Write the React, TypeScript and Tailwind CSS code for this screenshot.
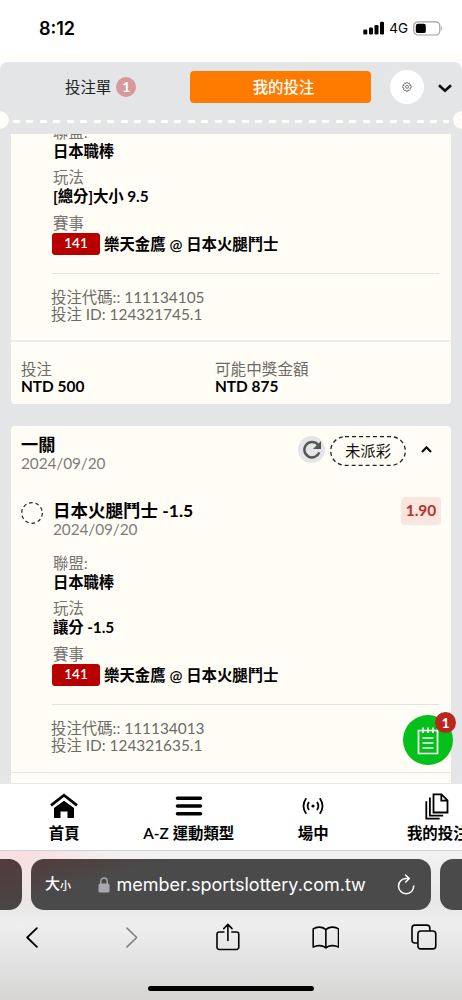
import { ReactNode } from "react";

interface IField {
  label: string;
  value: string;
}

interface IBet {
  code: string;
  id: string;
  fields: IField[];
}

const bets: IBet[] = [
  {
    code: "111134105",
    id: "124321745.1",
    fields: [
      { label: "聯盟:", value: "日本職棒" },
      { label: "玩法", value: "[總分]大小 9.5" },
    ],
  },
  {
    code: "111134013",
    id: "124321635.1",
    fields: [
      { label: "聯盟:", value: "日本職棒" },
      { label: "玩法", value: "讓分 -1.5" },
    ],
  },
];

const BetDetail = ({ bet }: { bet: IBet }) => {
  return (
    <div className="pl-[42px] pr-3">
      {bet.fields.map((data, index) => (
        <div key={`keyField${index}`} className="mb-[7.5px]">
          <div className="leading-[19px] text-[#73736f]">{data.label}</div>
          <div className="leading-[19px] font-bold tracking-[-0.1px] text-black">
            {data.value}
          </div>
        </div>
      ))}
      <div className="leading-[19px] text-[#73736f]">賽事</div>
      <div className="flex h-[22px] items-center">
        <span className="mr-[5px] -ml-px flex h-[22px] w-12 items-center justify-center rounded-[3px] bg-[#b80000] text-[13.5px] font-semibold text-white">
          141
        </span>
        <span className="mt-0.5 -ml-px font-semibold text-black">
          樂天金鷹 @ 日本火腿鬥士
        </span>
      </div>
      <div className="mt-[18px] -ml-px border-t border-[#e3e2dc]" />
      <div className="mt-[15px] -ml-0.5 pb-[18px] leading-[17px] text-[#6b6b67]">
        <div>投注代碼:: {bet.code}</div>
        <div>投注 ID: {bet.id}</div>
      </div>
    </div>
  );
};

const NavItem = ({ label, children }: { label: string; children: ReactNode }) => {
  return (
    <div className="flex w-[124.5px] shrink-0 flex-col items-center pt-[7px]">
      <div className="flex h-[30px] items-center">{children}</div>
      <div className="text-[15.4px] leading-6 font-semibold whitespace-nowrap text-black">
        {label}
      </div>
    </div>
  );
};

const StatusBar = () => {
  return (
    <div className="flex h-[54px] shrink-0 items-center justify-between bg-white pt-[2px] pr-[19px] pl-[39px] font-['Inter',sans-serif]">
      <span className="text-[18px] font-semibold text-black">8:12</span>
      <div className="flex items-center">
        <svg width="22" height="14" viewBox="0 0 22 14" className="mr-1">
          <rect x="0.3" y="8.5" width="4" height="5" rx="1.2" />
          <rect x="6" y="6.5" width="4" height="7" rx="1.2" />
          <rect x="11.5" y="4" width="4" height="9.5" rx="1.2" />
          <rect x="17" y="0.8" width="4" height="12.7" rx="1.2" />
        </svg>
        <span className="mr-[5px] text-[13.5px] text-black">4G</span>
        <svg width="30" height="15" viewBox="0 0 30 15" fill="none">
          <rect x="0.8" y="0.8" width="26" height="13.2" rx="4" stroke="#a0a0a0" strokeWidth="1.2" />
          <rect x="2.8" y="2.7" width="10" height="9.4" rx="2.2" fill="#000" />
          <path d="M28.2 5.2c1.3.6 1.3 3.8 0 4.4z" fill="#a0a0a0" />
        </svg>
      </div>
    </div>
  );
};

const SlipHeader = () => {
  return (
    <div className="h-[80px] shrink-0 bg-[#fffdf5] pt-2">
      <div className="h-[72px] rounded-t-[8px] bg-[#e4e5e7] pt-[9px]">
        <div className="flex h-8 items-center">
          <div className="flex w-[190px] items-center pl-[65px] text-[15.4px] text-[#222]">
            <span className="pt-0.5">投注單</span>
            <span className="ml-[5px] flex size-5 items-center justify-center rounded-full bg-[#d7999b] text-[14px] font-bold text-white">
              1
            </span>
          </div>
          <div className="flex h-8 w-[181px] items-center justify-center rounded-[4px] bg-[#ff7b00] pt-0.5 pl-[6px] text-[15.4px] font-medium text-white">
            我的投注
          </div>
          <div className="ml-[19px] flex size-[34px] items-center justify-center rounded-full bg-white">
            <svg width="10" height="10" viewBox="0 0 10 10" fill="none" stroke="#555" strokeWidth="0.8">
              <path d="M4.200.6h1.600l.3 1 1-.5 1.200 1.100-.6 1.100 1.400.4v2.100l-1.300.4.5 1.100-1.100 1.200-1.200-.5-.4 1.300H4.200L3.800 8l-1.200.5-1.100-1.200.5-1.100L.8 5.800V3.700l1.300-.4-.5-1.100L2.700 1.100l1.100.5z" />
              <circle cx="5" cy="4.800" r="1.500" />
            </svg>
          </div>
          <svg width="14" height="9" viewBox="0 0 14 9" fill="none" stroke="#111" strokeWidth="2.600" className="mt-0.5 ml-[14px]">
            <path d="M1 1.200l6 5.600 6-5.600" />
          </svg>
        </div>
        <div className="mt-2 flex h-[18px] items-center justify-between">
          <span className="h-[18px] w-[9px] rounded-r-full bg-[#fffdf5]" />
          <span className="mt-[3px] mr-1 ml-1 h-[3px] flex-1 bg-[repeating-linear-gradient(90deg,#fffdf5_0_7px,transparent_7px_13.45px)]" />
          <span className="h-[18px] w-[9px] rounded-l-full bg-[#fffdf5]" />
        </div>
      </div>
    </div>
  );
};

const BetList = () => {
  return (
    <div className="h-[649px] shrink-0 overflow-hidden bg-[#e4e5e7] pr-[11px] pl-[11px] text-[15.4px]">
      <div className="h-[270px] overflow-hidden rounded-b-[4px] bg-[#fffdf5]">
        <div className="-mt-[11.5px] -mb-px">
          <BetDetail bet={bets[0]} />
        </div>
        <div className="flex border-t-2 border-[#eeede8] pt-[19px] pl-[10px] leading-[17px]">
          <div className="w-[194px]">
            <div className="text-[#6b6b67]">投注</div>
            <div className="font-bold text-black">NTD 500</div>
          </div>
          <div>
            <div className="text-[15.6px] text-[#6b6b67]">可能中獎金額</div>
            <div className="font-bold text-black">NTD 875</div>
          </div>
        </div>
      </div>

      <div className="mt-[22px] h-[380px] rounded-t-[4px] bg-[#fffdf5]">
        <div className="flex h-[71px] pt-[9px] pl-[10px]">
          <div className="w-[277px]">
            <div className="text-[17.2px] leading-[19px] font-semibold text-black">
              一關
            </div>
            <div className="leading-[18px] tracking-[-0.1px] text-[#7d7d79]">
              2024/09/20
            </div>
          </div>
          <span className="mt-px flex size-[27px] items-center justify-center rounded-full bg-[#e4e5e7]">
            <svg width="20" height="20" viewBox="0 0 20 20" fill="none">
              <path d="M16 4.800A7.700 7.700 0 1 0 17.300 12.300" stroke="#555" strokeWidth="2.400" />
              <path d="M19 1v8h-8z" fill="#555" />
            </svg>
          </span>
          <span className="relative mt-px ml-[5px] flex h-[30px] w-[76px] items-center justify-center pt-[2px] text-[15.4px] text-[#111]">
            <svg className="absolute inset-0" width="76" height="30" fill="none">
              <rect x="0.700" y="0.700" width="74.600" height="28.600" rx="14.300" stroke="#222" strokeWidth="1.300" strokeDasharray="4 3" />
            </svg>
            未派彩
          </span>
          <svg width="11" height="8" viewBox="0 0 11 8" fill="none" stroke="#111" strokeWidth="2.300" className="mt-[10px] ml-[15px]">
            <path d="M1 7l4.500-4.700 4.500 4.700" />
          </svg>
        </div>
        <div className="flex h-[56.5px] pt-[4px] pl-[10px]">
          <svg width="22" height="22" fill="none" className="mt-[1px]">
            <circle cx="11" cy="11" r="10.300" stroke="#222" strokeWidth="1.200" strokeDasharray="3.600 2.870" />
          </svg>
          <div className="ml-[10px] w-[348px]">
            <div className="text-[17.500px] leading-[19px] font-bold text-black">
              日本火腿鬥士 -1.5
            </div>
            <div className="leading-[18px] tracking-[-0.1px] text-[#7d7d79]">
              2024/09/20
            </div>
          </div>
          <span className="-mt-1 flex h-[28px] w-10 items-center justify-center rounded-[4px] bg-[#f8e6df] font-bold text-[#bd2c24]">
            1.90
          </span>
        </div>
        <BetDetail bet={bets[1]} />
        <div className="border-t border-[#e6e5df]" />
      </div>
    </div>
  );
};

const BottomNav = () => {
  return (
    <div className="flex h-[67px] shrink-0 overflow-hidden border-t border-[#e6e6e4] bg-white pl-[2px]">
      <NavItem label="首頁">
        <svg width="28" height="26" viewBox="0 0 28 26">
          <path d="M1 12.300L14 2.200l13 10.100" fill="none" stroke="#000" strokeWidth="2.800" />
          <path d="M4 15L14 7.700l10 7.300V25h-6.500v-6.500h-7V25H4z" />
        </svg>
      </NavItem>
      <NavItem label="A-Z 運動類型">
        <svg width="28" height="20" viewBox="0 0 28 20" stroke="#000" strokeWidth="3.600" strokeLinecap="round">
          <path d="M2.500 2.300h23M2.500 10h23M2.500 17.700h23" />
        </svg>
      </NavItem>
      <NavItem label="場中">
        <svg width="22" height="18" viewBox="0 0 22 18" fill="none" stroke="#000" strokeWidth="1.800">
          <circle cx="11" cy="9" r="1.600" fill="#000" stroke="none" />
          <path d="M7 5q-2.800 4 0 8M15 5q2.800 4 0 8M4.200 1.200q-5.500 7.800 0 15.600M17.800 1.200q5.500 7.800 0 15.600" />
        </svg>
      </NavItem>
      <NavItem label="我的投注">
        <svg width="24" height="27" viewBox="0 0 24 27" fill="none" stroke="#000" strokeWidth="1.800" className="-ml-0.5">
          <path d="M8.500 1.300h8l6 6v12.200h-14zM16.300 1.300v6.300h6.200" />
          <path d="M4.900 4.500v18.200h13.300M1.300 8.200v17.500h13.300" />
        </svg>
      </NavItem>
    </div>
  );
};

const Browser = () => {
  return (
    <div className="relative h-[150px] shrink-0 overflow-hidden border-t border-[#d2d2d2] bg-[radial-gradient(ellipse_100px_70px_at_22px_0px,#f8dedf,transparent),linear-gradient(180deg,#f2f2f2_0%,#e7e7e7_35%,#eeeeee_50%,#e5e5e5_68%,#d6d5d4_100%)] font-['Inter','Noto_Sans_CJK_TC',sans-serif]">
      <div className="mt-2 -ml-5 flex h-[51px] w-[520px] gap-[9px]">
        <div className="w-[42px] shrink-0 rounded-[13px] bg-[linear-gradient(180deg,#533b3b,#494646)]" />
        <div className="flex w-[400px] shrink-0 items-center rounded-[13px] bg-[linear-gradient(165deg,#533b3b_0%,#4a4a4a_25%)] pl-[14px] text-white">
          <span className="text-[15px] font-medium">大</span>
          <span className="mt-1 text-[11px] font-medium">小</span>
          <svg width="12" height="16" viewBox="0 0 12 16" className="mr-[6.5px] ml-[27px]">
            <rect x="0.500" y="6.500" width="11" height="9" rx="1.500" fill="#aaa8ae" />
            <path d="M2.800 7V4.500a3.200 3.500 0 0 1 6.400 0V7" fill="none" stroke="#aaa8ae" strokeWidth="1.400" />
          </svg>
          <span className="w-[280px] text-[18px]">
            member.sportslottery.com.tw
          </span>
          <svg width="18" height="21" viewBox="0 0 18 21" fill="none" stroke="#fff" strokeWidth="1.500" strokeLinecap="round" strokeLinejoin="round">
            <path d="M11.500 4.500H9A7.600 7.600 0 1 0 16.700 12M8.500 1l3.800 3.500-3.600 3.500" />
          </svg>
        </div>
        <div className="w-[42px] shrink-0 rounded-[13px] bg-[#4a4a4a]" />
      </div>
      <div className="mt-[12px] flex h-[30px] items-center justify-between pr-[25px] pl-[26px]">
        <svg width="12" height="21" viewBox="0 0 12 21" fill="none" stroke="#000" strokeWidth="1.800" strokeLinecap="round" strokeLinejoin="round">
          <path d="M11 1L1.200 10.500 11 20" />
        </svg>
        <svg width="12" height="21" viewBox="0 0 12 21" fill="none" stroke="#7d7d7d" strokeWidth="1.500" strokeLinecap="round" strokeLinejoin="round" className="ml-[88px]">
          <path d="M1 1l9.800 9.500L1 20" />
        </svg>
        <svg width="24" height="28" viewBox="0 0 24 28" fill="none" stroke="#000" strokeWidth="1.600" strokeLinecap="round" strokeLinejoin="round" className="ml-[78px]">
          <path d="M8 9H3.300A2.300 2.300 0 0 0 1 11.300v13A2.300 2.300 0 0 0 3.300 26.600h17.400a2.300 2.300 0 0 0 2.300-2.300v-13A2.300 2.300 0 0 0 20.700 9H16M12 17.500V1.500M7.800 5.500L12 1.300l4.200 4.200" />
        </svg>
        <svg width="28" height="23" viewBox="0 0 28 23" fill="none" stroke="#000" strokeWidth="1.600" strokeLinejoin="round" className="ml-[72px]">
          <path d="M14 3.500C11 .5 5 .2 1.200 2.800v18.400c4-2.200 9.500-2 12.800.8 3.300-2.800 8.800-3 12.800-.8V2.800C23 .2 17 .5 14 3.500zM14 3.500V22" />
        </svg>
        <svg width="26" height="26" viewBox="0 0 26 26" fill="none" stroke="#000" strokeWidth="1.600" className="ml-[72px]">
          <rect x="7" y="7" width="18" height="18" rx="3" />
          <path d="M7 19H4a3 3 0 0 1-3-3V4a3 3 0 0 1 3-3h12a3 3 0 0 1 3 3v3" />
        </svg>
      </div>
      <div className="mt-[34px] ml-[148px] h-[5px] w-[166px] rounded-full bg-black" />
    </div>
  );
};

export default function App() {
  return (
    <div className="relative flex h-[1000px] w-[462px] flex-col overflow-hidden bg-white font-['Lato','Noto_Sans_CJK_TC',sans-serif]">
      <StatusBar />
      <SlipHeader />
      <BetList />
      <BottomNav />
      <Browser />

      {/* floating bet slip button */}
      <div className="absolute top-[715px] left-[403px] flex size-[50px] items-center justify-center rounded-full bg-[#04c01a]">
        <svg width="22" height="28" viewBox="0 0 22 28" fill="none" stroke="#fff" className="mt-px">
          <path d="M1.500 3.500h19v23h-19z" strokeWidth="1.700" />
          <path d="M6 .5v5.500M11 .5v5.500M16 .5v5.500M5.500 11h11M5.500 16h11M5.500 21h11" strokeWidth="1.600" />
        </svg>
        <span className="absolute -top-[3px] left-[32px] flex size-[21px] items-center justify-center rounded-full bg-[#b8261d] text-[14px] font-bold text-white">
          1
        </span>
      </div>
    </div>
  );
}
